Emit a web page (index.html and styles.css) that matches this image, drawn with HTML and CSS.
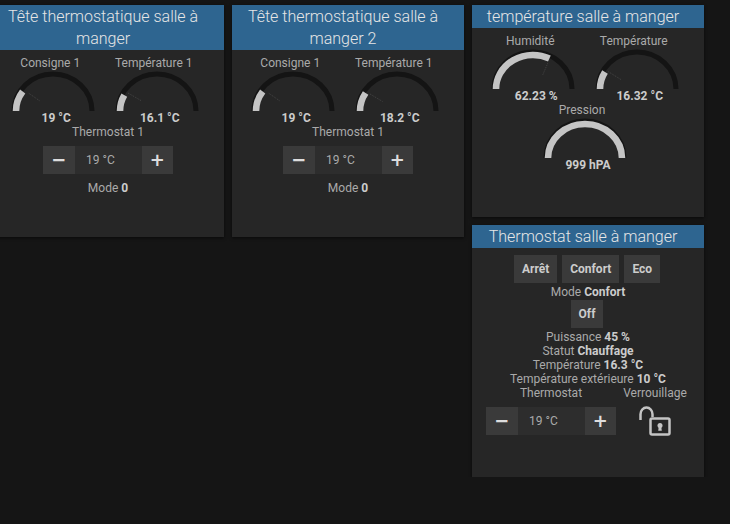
FILE: index.html
```html
<!DOCTYPE html>
<html lang="fr">
<head>
    <meta charset="UTF-8">
    <title>Salle à manger</title>
    <link rel="stylesheet" href="styles.css">
</head>
<body>
    <div class="board">
        <div class="column">
            <div class="card card-head">
                <h2>Tête thermostatique salle à manger</h2>
                <div class="gauges">
                    <div class="gauge">
                        <div class="gauge-label">Consigne 1</div>
                        <svg width="84" height="41" viewBox="0 0 84 41"><path class="track" d="M3 41A39 37 0 0 1 81 41"/><path class="fill" d="M5 41A37 34 0 0 1 11.7 21.5"/><path class="needle" d="M17.8 23.3L28.5 30.7"/></svg>
                        <div class="gauge-value">19 °C</div>
                    </div>
                    <div class="gauge">
                        <div class="gauge-label">Température 1</div>
                        <svg width="84" height="41" viewBox="0 0 84 41"><path class="track" d="M3 41A39 37 0 0 1 81 41"/><path class="fill" d="M5 41A37 34 0 0 1 9.3 25.1"/><path class="needle" d="M13 23L26.7 31"/></svg>
                        <div class="gauge-value">16.1 °C</div>
                    </div>
                </div>
                <div class="line">Thermostat 1</div>
                <div class="stepper">
                    <button class="step">−</button>
                    <span class="step-value">19 °C</span>
                    <button class="step">+</button>
                </div>
                <div class="line mode">Mode <b>0</b></div>
            </div>
        </div>
        <div class="column">
            <div class="card card-head">
                <h2>Tête thermostatique salle à manger 2</h2>
                <div class="gauges">
                    <div class="gauge">
                        <div class="gauge-label">Consigne 1</div>
                        <svg width="84" height="41" viewBox="0 0 84 41"><path class="track" d="M3 41A39 37 0 0 1 81 41"/><path class="fill" d="M5 41A37 34 0 0 1 11.7 21.5"/><path class="needle" d="M17.8 23.3L28.5 30.7"/></svg>
                        <div class="gauge-value">19 °C</div>
                    </div>
                    <div class="gauge">
                        <div class="gauge-label">Température 1</div>
                        <svg width="84" height="41" viewBox="0 0 84 41"><path class="track" d="M3 41A39 37 0 0 1 81 41"/><path class="fill" d="M5 41A37 34 0 0 1 10.6 23"/><path class="needle" d="M15 24L27.5 31.5"/></svg>
                        <div class="gauge-value">18.2 °C</div>
                    </div>
                </div>
                <div class="line">Thermostat 1</div>
                <div class="stepper">
                    <button class="step">−</button>
                    <span class="step-value">19 °C</span>
                    <button class="step">+</button>
                </div>
                <div class="line mode">Mode <b>0</b></div>
            </div>
        </div>
        <div class="column">
            <div class="card card-temp">
                <h2>température salle à manger</h2>
                <div class="gauges">
                    <div class="gauge">
                        <div class="gauge-label">Humidité</div>
                        <svg width="84" height="41" viewBox="0 0 84 41"><path class="track" d="M3 41A39 37 0 0 1 81 41"/><path class="fill" d="M5 41A37 34 0 0 1 58.4 10.5"/><path class="needle" d="M56.7 15.3L51.7 27"/></svg>
                        <div class="gauge-value">62.23 %</div>
                    </div>
                    <div class="gauge">
                        <div class="gauge-label">Température</div>
                        <svg width="84" height="41" viewBox="0 0 84 41"><path class="track" d="M3 41A39 37 0 0 1 81 41"/><path class="fill" d="M5 41A37 34 0 0 1 10 24"/><path class="needle" d="M13.3 23.7L26.7 32"/></svg>
                        <div class="gauge-value">16.32 °C</div>
                    </div>
                    <div class="gauge">
                        <div class="gauge-label">Pression</div>
                        <svg width="84" height="41" viewBox="0 0 84 41"><path class="track" d="M3 41A39 37 0 0 1 81 41"/><path class="fill" d="M5 41A37 34 0 0 1 79 41"/></svg>
                        <div class="gauge-value">999 hPA</div>
                    </div>
                </div>
            </div>
            <div class="card card-thermostat">
                <h2>Thermostat salle à manger</h2>
                <div class="button-row">
                    <button class="action">Arrêt</button>
                    <button class="action">Confort</button>
                    <button class="action">Eco</button>
                </div>
                <div class="line mode-line">Mode <b>Confort</b></div>
                <div class="button-row">
                    <button class="action">Off</button>
                </div>
                <div class="status">
                    <div class="line">Puissance <b>45 %</b></div>
                    <div class="line">Statut <b>Chauffage</b></div>
                    <div class="line">Température <b>16.3 °C</b></div>
                    <div class="line">Température extérieure <b>10 °C</b></div>
                </div>
                <div class="controls">
                    <div class="control">
                        <div class="line">Thermostat</div>
                        <div class="stepper">
                            <button class="step">−</button>
                            <span class="step-value">19 °C</span>
                            <button class="step">+</button>
                        </div>
                    </div>
                    <div class="control lock">
                        <div class="line">Verrouillage</div>
                        <svg class="lock-icon" width="34" height="31" viewBox="0 0 34 31"><path d="M2.5 14V8.2A6 6.7 0 0 1 14.5 8.2V11"/><rect x="12.5" y="12.5" width="19" height="16" rx="1.5"/><circle class="keyhole" cx="22" cy="19.5" r="2.5"/><path class="keyhole" d="M20.8 20.5H23.2L23.8 24.7H20.2Z"/></svg>
                    </div>
                </div>
            </div>
        </div>
    </div>
</body>
</html>
```

FILE: styles.css
```css
body {
    margin: 0;
    background-color: #151515;
    font-family: Roboto, Arial, sans-serif;
    font-size: 12px;
    line-height: 14px;
    color: #aaa;
    overflow: hidden;
}
.board {
    display: flex;
    gap: 8px;
    margin-left: -8px;
    padding-top: 5px;
}
.column {
    width: 232px;
    display: flex;
    flex-direction: column;
    gap: 8px;
}
.card {
    background-color: #262626;
    box-shadow: 0 1px 3px rgba(0, 0, 0, 0.6);
    text-align: center;
}
.card-head {
    height: 232px;
}
.card-temp {
    height: 212px;
}
.card-thermostat {
    height: 252px;
}
h2 {
    margin: 0;
    padding: 1px 10px 0 0;
    background-color: #2e6590;
    color: #e6e6e6;
    font-size: 16px;
    font-weight: 300;
    line-height: 22px;
}
.gauges {
    display: flex;
    flex-wrap: wrap;
    justify-content: center;
    padding: 6px 6px 0 0;
}
.gauge {
    width: 103.5px;
}
.gauge svg {
    display: block;
    margin: 0 auto;
}
.gauge-label {
    padding-right: 6px;
}
.gauge-value {
    padding-left: 6px;
    font-weight: 700;
    color: #ccc;
}
.track {
    fill: none;
    stroke: #141414;
    stroke-width: 5;
}
.fill {
    fill: none;
    stroke: #c4c4c4;
    stroke-width: 6.6;
}
.needle {
    fill: none;
    stroke: #444;
    stroke-width: 1;
    stroke-dasharray: 1 1;
}
.stepper {
    display: flex;
    justify-content: center;
    margin-top: 6.5px;
}
.step {
    width: 31.5px;
    height: 28px;
    padding: 0;
    border: none;
    background-color: #3a3a3a;
    color: #ddd;
    font-family: "DejaVu Sans", sans-serif;
    font-size: 18px;
    font-weight: 700;
    line-height: 28px;
}
.step-value {
    width: 67px;
    background-color: #2d2d2d;
    padding-right: 15px;
    box-sizing: border-box;
    line-height: 28px;
    color: #aaa;
}
.mode {
    margin-top: 7px;
}
b {
    color: #ccc;
}
.button-row {
    display: flex;
    justify-content: center;
    gap: 5px;
    padding-right: 2px;
}
.card-thermostat .button-row:first-of-type {
    padding-top: 7px;
}
.action {
    height: 28px;
    padding: 0 8px;
    border: none;
    background-color: #3a3a3a;
    color: #ccc;
    font-family: Roboto, Arial, sans-serif;
    font-size: 12px;
    font-weight: 700;
}
.mode-line {
    margin: 2px 0 1px;
}
.status {
    margin-top: 2px;
}
.controls {
    display: flex;
    justify-content: center;
    gap: 7px;
    padding-right: 3px;
}
.control {
    width: 130px;
}
.control.lock {
    width: 64px;
}
.lock-icon {
    display: block;
    margin: 6px auto 0;
    fill: none;
    stroke: #c4c4c4;
    stroke-width: 2.5;
}
.keyhole {
    fill: #c4c4c4;
    stroke: none;
}
```
